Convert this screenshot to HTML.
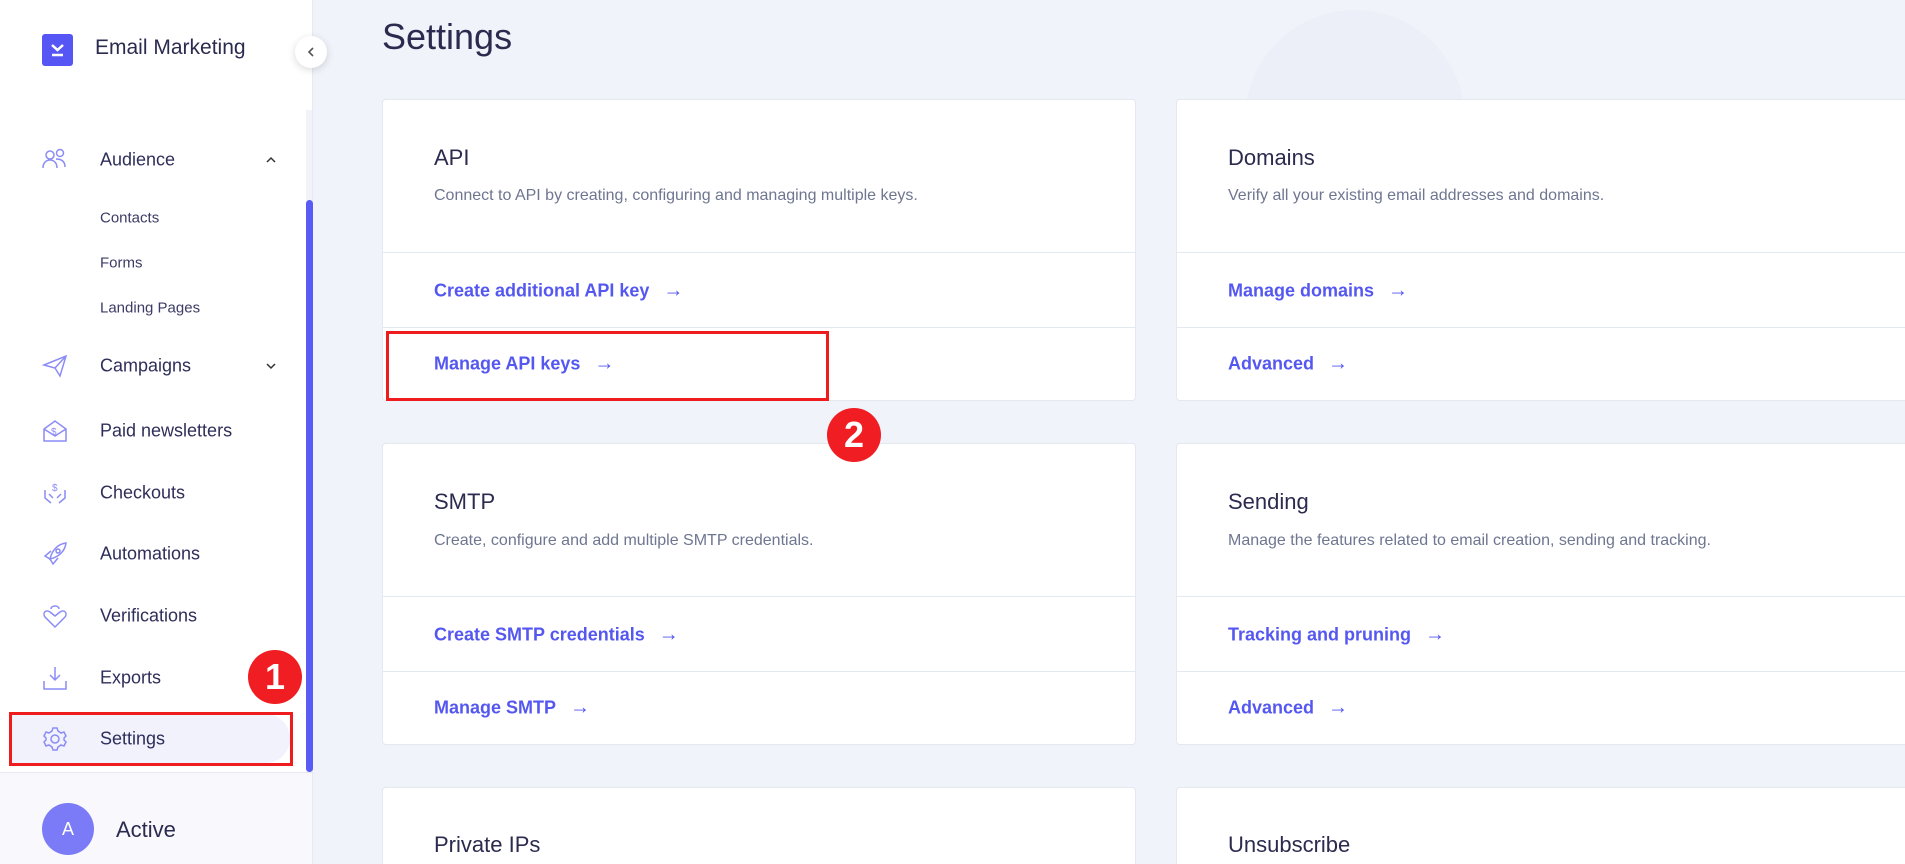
<!DOCTYPE html>
<html><head><meta charset="utf-8">
<style>
*{margin:0;padding:0;box-sizing:border-box}
html{width:1905px;height:864px;overflow:hidden}
body{width:1905px;height:864px;overflow:hidden;background:#f0f3f9;font-family:"Liberation Sans",sans-serif;position:relative;color:#2b2b4f}
.abs{position:absolute}
.side{left:0;top:0;width:313px;height:864px;background:#fff;border-right:1px solid #e6e9f2}
.nav{position:absolute;left:100px;font-size:18px;color:#2e2e5a;transform:translateY(-50%)}
.sub{position:absolute;left:100px;font-size:15px;color:#3b3b66;transform:translateY(-50%)}
.ic{position:absolute;left:42px;width:26px;height:26px;transform:translateY(-50%)}
.card{position:absolute;background:#fff;border:1px solid #e3e8f1;border-radius:4px;overflow:hidden}
.card .t{position:absolute;left:51px;font-size:22px;color:#2b2b4f;transform:translateY(-50%)}
.card .d{position:absolute;left:51px;font-size:16px;color:#6e7690;transform:translateY(-50%)}
.card .l{position:absolute;left:51px;font-size:18px;font-weight:bold;color:#5457f0;transform:translateY(-50%)}
.card .l span{font-weight:normal;font-size:20px;margin-left:14px}
.card .hr{position:absolute;left:0;right:0;height:1px;background:#e3e8f1}
.badge{position:absolute;width:54px;height:54px;border-radius:50%;background:#f01e23;color:#fff;font-weight:bold;font-size:36px;text-align:center;line-height:54px}
.red{position:absolute;border:3px solid #ee1c1c}
</style></head><body>
<div class="abs" style="left:1245px;top:10px;width:220px;height:220px;border-radius:50%;background:#eceff8"></div>
<div class="abs side"></div>
<div class="abs" style="left:42px;top:34px;width:31px;height:32px;background:#5656f5;border-radius:3px"></div>
<svg class="abs" style="left:42px;top:34px" width="31" height="32" viewBox="0 0 31 32"><path d="M10 11l5.5 5 5.5-5M10 21h11" stroke="#fff" stroke-width="2.5" fill="none"/></svg>
<div class="abs" style="left:95px;top:36px;font-size:21px;color:#2b2b4f">Email Marketing</div>
<div class="abs" style="left:295px;top:36px;width:32px;height:32px;border-radius:50%;background:#fff;box-shadow:0 2px 8px rgba(0,0,0,.15)"></div>
<svg class="abs" style="left:305px;top:46px" width="12" height="12"><path d="M8 2L4 6l4 4" stroke="#555" stroke-width="1.6" fill="none"/></svg>
<div class="abs" style="left:306px;top:110px;width:6px;height:662px;background:#f1f3f9"></div>
<div class="abs" style="left:306px;top:200px;width:7px;height:572px;background:#5a5af5;border-radius:4px"></div>

<svg class="ic" style="top:160px" viewBox="0 0 26 26" fill="none" stroke="#8b8cf5" stroke-width="1.5"><circle cx="8" cy="8" r="4"/><circle cx="18" cy="6" r="3.5"/><path d="M1 21c0-5 3-8 7-8s7 3 7 8M14 12c5 0 9 2 9 8"/></svg>
<div class="nav" style="top:160px">Audience</div>
<svg class="abs" style="left:266px;top:156px" width="10" height="8"><path d="M1 6l4-4 4 4" stroke="#333" stroke-width="1.5" fill="none"/></svg>
<div class="sub" style="top:218px">Contacts</div>
<div class="sub" style="top:263px">Forms</div>
<div class="sub" style="top:308px">Landing Pages</div>
<svg class="ic" style="top:366px" viewBox="0 0 26 26" fill="none" stroke="#8b8cf5" stroke-width="1.5"><path d="M2 12L24 3l-6 20-5-8z M13 15L24 3"/></svg>
<div class="nav" style="top:366px">Campaigns</div>
<svg class="abs" style="left:266px;top:362px" width="10" height="8"><path d="M1 2l4 4 4-4" stroke="#333" stroke-width="1.5" fill="none"/></svg>
<svg class="ic" style="top:431px" viewBox="0 0 26 26" fill="none" stroke="#8b8cf5" stroke-width="1.5"><path d="M2 11l11-8 11 8v12H2z M2 11l11 7 11-7"/><text x="9" y="17" font-size="10" fill="#8b8cf5" stroke="none">$</text></svg>
<div class="nav" style="top:431px">Paid newsletters</div>
<svg class="ic" style="top:493px" viewBox="0 0 26 26" fill="none" stroke="#8b8cf5" stroke-width="1.5"><path d="M3 10v8l6 5M23 10v8l-6 5M7 14l4 4M19 14l-4 4"/><text x="10" y="11" font-size="10" fill="#8b8cf5" stroke="none">$</text></svg>
<div class="nav" style="top:493px">Checkouts</div>
<svg class="ic" style="top:554px" viewBox="0 0 26 26" fill="none" stroke="#8b8cf5" stroke-width="1.5"><path d="M8 18C10 9 16 3 24 2c-1 8-7 14-16 16zM8 18l-5-3 6-5M8 18l3 5 5-6"/><circle cx="16" cy="10" r="2"/></svg>
<div class="nav" style="top:554px">Automations</div>
<svg class="ic" style="top:616px" viewBox="0 0 26 26" fill="none" stroke="#8b8cf5" stroke-width="1.5"><path d="M13 24L3 14c-3-4 1-8 5-5l5 4 5-4c4-3 8 1 5 5z M9 6c0-4 8-4 8 0"/></svg>
<div class="nav" style="top:616px">Verifications</div>
<svg class="ic" style="top:678px" viewBox="0 0 26 26" fill="none" stroke="#8b8cf5" stroke-width="1.5"><path d="M13 2v13M8 10l5 5 5-5M2 16v8h22v-8"/></svg>
<div class="nav" style="top:678px">Exports</div>
<div class="abs" style="left:10px;top:714px;width:280px;height:49px;background:#f1f2fc;border-radius:0 25px 25px 0"></div>
<svg class="ic" style="top:739px" viewBox="0 0 26 26" fill="none" stroke="#8b8cf5" stroke-width="1.5"><circle cx="13" cy="13" r="4"/><path d="M11 2h4l1 3 3 2 3-1 2 4-2 2v2l2 2-2 4-3-1-3 2-1 3h-4l-1-3-3-2-3 1-2-4 2-2v-2l-2-2 2-4 3 1 3-2z"/></svg>
<div class="nav" style="top:739px">Settings</div>
<div class="red" style="left:9px;top:712px;width:284px;height:54px"></div>
<div class="badge" style="left:248px;top:650px">1</div>
<div class="abs" style="left:0;top:772px;width:313px;height:92px;background:#f8f8fd;border-top:1px solid #e6e9f2;border-right:1px solid #e6e9f2"></div>
<div class="abs" style="left:42px;top:803px;width:52px;height:52px;border-radius:50%;background:#7b7bf7;color:#fff;font-size:18px;text-align:center;line-height:52px">A</div>
<div class="abs" style="left:116px;top:817px;font-size:22px;color:#2b2b4f">Active</div>

<div class="abs" style="left:382px;top:16px;font-size:36px;color:#2b2b4f">Settings</div>

<div class="card" style="left:382px;top:99px;width:754px;height:302px">
<div class="t" style="top:58px">API</div>
<div class="d" style="top:96px">Connect to API by creating, configuring and managing multiple keys.</div>
<div class="hr" style="top:152px"></div>
<div class="l" style="top:191px">Create additional API key<span>&rarr;</span></div>
<div class="hr" style="top:227px"></div>
<div class="l" style="top:264px">Manage API keys<span>&rarr;</span></div>
</div>
<div class="card" style="left:1176px;top:99px;width:760px;height:302px">
<div class="t" style="top:58px">Domains</div>
<div class="d" style="top:96px">Verify all your existing email addresses and domains.</div>
<div class="hr" style="top:152px"></div>
<div class="l" style="top:191px">Manage domains<span>&rarr;</span></div>
<div class="hr" style="top:227px"></div>
<div class="l" style="top:264px">Advanced<span>&rarr;</span></div>
</div>
<div class="card" style="left:382px;top:443px;width:754px;height:302px">
<div class="t" style="top:58px">SMTP</div>
<div class="d" style="top:97px">Create, configure and add multiple SMTP credentials.</div>
<div class="hr" style="top:152px"></div>
<div class="l" style="top:191px">Create SMTP credentials<span>&rarr;</span></div>
<div class="hr" style="top:227px"></div>
<div class="l" style="top:264px">Manage SMTP<span>&rarr;</span></div>
</div>
<div class="card" style="left:1176px;top:443px;width:760px;height:302px">
<div class="t" style="top:58px">Sending</div>
<div class="d" style="top:97px">Manage the features related to email creation, sending and tracking.</div>
<div class="hr" style="top:152px"></div>
<div class="l" style="top:191px">Tracking and pruning<span>&rarr;</span></div>
<div class="hr" style="top:227px"></div>
<div class="l" style="top:264px">Advanced<span>&rarr;</span></div>
</div>
<div class="card" style="left:382px;top:787px;width:754px;height:77px;border-bottom:none;border-radius:4px 4px 0 0">
<div class="t" style="top:57px">Private IPs</div>
</div>
<div class="card" style="left:1176px;top:787px;width:729px;height:77px;border-bottom:none;border-right:none;border-radius:4px 0 0 0">
<div class="t" style="top:57px">Unsubscribe</div>
</div>
<div class="red" style="left:386px;top:331px;width:443px;height:70px"></div>
<div class="badge" style="left:827px;top:408px">2</div>
</body></html>
